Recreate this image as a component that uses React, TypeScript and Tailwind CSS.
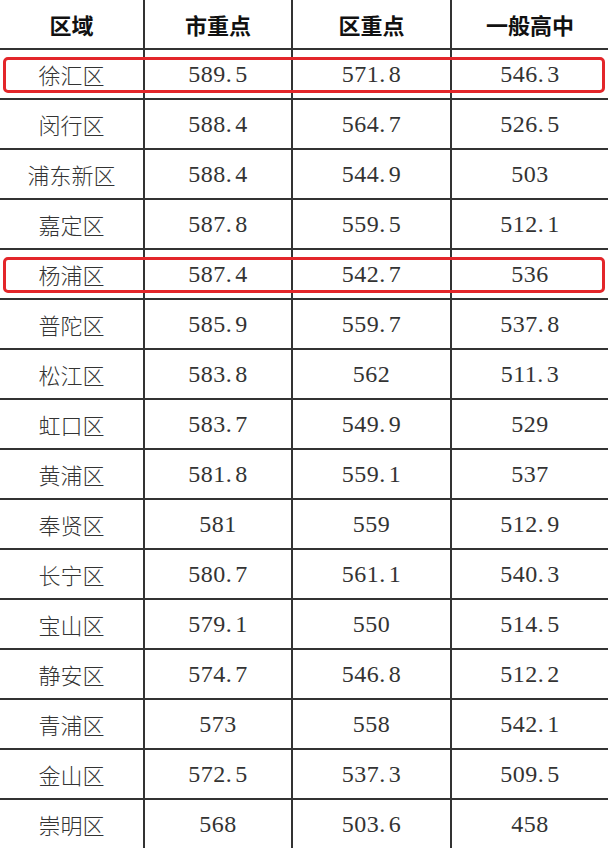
import React from "react";

const rows: [string, string, string, string, boolean][] = [
  ["徐汇区", "589.5", "571.8", "546.3", true],
  ["闵行区", "588.4", "564.7", "526.5", false],
  ["浦东新区", "588.4", "544.9", "503", false],
  ["嘉定区", "587.8", "559.5", "512.1", false],
  ["杨浦区", "587.4", "542.7", "536", true],
  ["普陀区", "585.9", "559.7", "537.8", false],
  ["松江区", "583.8", "562", "511.3", false],
  ["虹口区", "583.7", "549.9", "529", false],
  ["黄浦区", "581.8", "559.1", "537", false],
  ["奉贤区", "581", "559", "512.9", false],
  ["长宁区", "580.7", "561.1", "540.3", false],
  ["宝山区", "579.1", "550", "514.5", false],
  ["静安区", "574.7", "546.8", "512.2", false],
  ["青浦区", "573", "558", "542.1", false],
  ["金山区", "572.5", "537.3", "509.5", false],
  ["崇明区", "568", "503.6", "458", false],
];

const cjk = { fontFamily: '"Noto Sans CJK SC", "Noto Sans", sans-serif' };
const num = { fontFamily: '"Liberation Serif", "Times New Roman", "DejaVu Serif", serif' };

function Num({ v }: { v: string }) {
  const parts = v.split(".");
  return (
    <span style={num} className="text-[24px] tracking-[0.5px]">
      {parts[0]}
      {parts.length > 1 && (
        <>
          <span className="mr-[3px]">.</span>
          {parts[1]}
        </>
      )}
    </span>
  );
}

export default function App() {
  return (
    <div className="w-[608px] h-[848px] bg-white overflow-hidden">
      <div className="flex h-[48px] items-center text-[#111] font-bold text-[22px]" style={cjk}>
        <div className="w-[143px] h-full flex items-center justify-center">区域</div>
        <div className="w-[148px] h-full flex items-center justify-center border-l-2 border-[#333]">市重点</div>
        <div className="w-[159px] h-full flex items-center justify-center border-l-2 border-[#333]">区重点</div>
        <div className="w-[158px] h-full flex items-center justify-center border-l-2 border-[#333]">一般高中</div>
      </div>
      {rows.map(([name, a, b, c, hl]) => (
        <div key={name} className="relative flex h-[50px] border-t-2 border-[#333] text-[#333]">
          <div className="w-[143px] h-full flex items-center justify-center text-[22px] font-light" style={cjk}>
            {name}
          </div>
          <div className="w-[148px] h-full flex items-center justify-center border-l-2 border-[#333]">
            <Num v={a} />
          </div>
          <div className="w-[159px] h-full flex items-center justify-center border-l-2 border-[#333]">
            <Num v={b} />
          </div>
          <div className="w-[158px] h-full flex items-center justify-center border-l-2 border-[#333]">
            <Num v={c} />
          </div>
          {hl && (
            <div className="absolute left-[3px] right-[3px] top-[7px] h-[36px] border-[3px] border-[#e3262a] rounded-[5px] pointer-events-none" />
          )}
        </div>
      ))}
    </div>
  );
}
